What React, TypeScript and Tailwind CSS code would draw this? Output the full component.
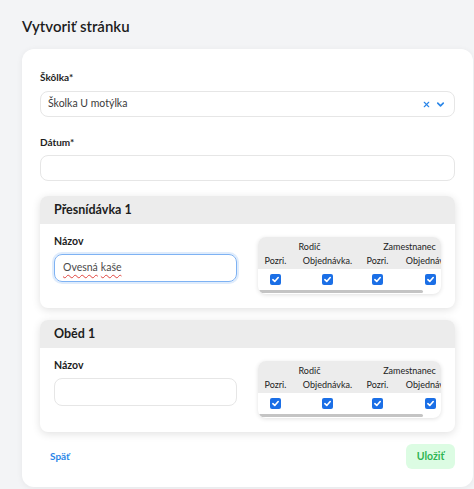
import React from "react";
import { X, ChevronDown } from "lucide-react";

const Check = () => (
    <span className="w-[11px] h-[11px] rounded-[2px] bg-[#1b6fe6] flex items-center justify-center">
        <svg width="9" height="9" viewBox="0 0 12 12" fill="none" stroke="white" strokeWidth="2.2" strokeLinecap="round" strokeLinejoin="round">
            <path d="M2.5 6.3 5 8.6 9.6 3.4" />
        </svg>
    </span>
);

// column widths of the scrolling rights table
const cols = ["w-[36px]", "w-[68px]", "w-[32px]", "w-[74px]"];

const RightsTable = () => (
    <div className="mt-[13px] w-[184px] h-[57px] rounded-[8px] bg-white shadow-[0_1px_4px_rgba(0,0,0,0.12)] overflow-hidden flex flex-col">
        <div className="w-[210px] bg-[#ececec] text-[9px] text-[#222]">
            <div className="flex h-[16px] items-end leading-[12px]">
                <div className="w-[104px] text-center">Rodič</div>
                <div className="w-[96px] text-center">Zamestnanec</div>
            </div>
            <div className="flex h-[16px] items-center leading-[12px]">
                <div className={`${cols[0]} text-center`}>Pozri.</div>
                <div className={`${cols[1]} text-center`}>Objednávka.</div>
                <div className={`${cols[2]} text-center`}>Pozri.</div>
                <div className={`${cols[3]} text-center whitespace-nowrap`}>Objednávka.</div>
            </div>
        </div>
        <div className="w-[210px] flex h-[21px] items-center">
            {cols.map((c, i) => (
                <div key={i} className={`${c} flex justify-center`}>
                    <Check />
                </div>
            ))}
        </div>
        <div className="h-[3px] w-[165px] rounded-full bg-[#c4c4c4]" />
    </div>
);

const MealSection = ({ title, value }: { title: string; value?: string }) => (
    <div className="rounded-[8px] bg-white overflow-hidden shadow-[0_2px_8px_rgba(0,0,0,0.12)]">
        <div className="h-[28px] bg-[#ececec] px-[14px] flex items-center text-[12.5px] font-bold text-[#1d1d1d]">{title}</div>
        <div className="h-[84px] flex px-[14px] gap-[21px]">
            <div className="w-[183px] pt-[8px]">
                <div className="h-[18px] leading-[18px] text-[10.5px] font-bold text-[#1d1d1d]">Názov</div>
                {value ? (
                    <div className="mt-[4px] h-[28px] rounded-[8px] border-[1.5px] border-[#7eb2f3] shadow-[0_0_0_2px_rgba(126,178,243,0.25)] flex items-center px-[8px] text-[10.5px] text-[#4a4a4a]">
                        {value.split(" ").map((w, i) => (
                            <span key={i} className="underline decoration-wavy decoration-[#e0443e] decoration-1 underline-offset-[3px] mr-[3px]">{w}</span>
                        ))}
                    </div>
                ) : (
                    <div className="mt-[4px] h-[28px] rounded-[8px] border border-[#e6e6e6]" />
                )}
            </div>
            <RightsTable />
        </div>
    </div>
);

export default function App() {
    return (
        <div className="w-[474px] h-[489px] overflow-hidden bg-[#f3f4f6] font-['Lato',sans-serif] text-[#1d1d1d]">
            <div className="pl-[22px] pt-[14px]">
                <h1 className="h-[24px] leading-[24px] text-[15px] font-semibold">Vytvoriť stránku</h1>

                <div className="mt-[11px] w-[451px] rounded-[12px] bg-white shadow-[0_1px_6px_rgba(0,0,0,0.06)] px-[18px] pt-[19px] pb-[18px]">
                    <div className="h-[18px] leading-[18px] text-[10px] font-bold">Škôlka*</div>
                    <div className="mt-[5px] h-[26px] rounded-[8px] border border-[#e6e6e6] flex items-center justify-between pl-[7px] pr-[8px]">
                        <span className="text-[10.5px] text-[#3a3a3a]">Školka U motýlka</span>
                        <span className="flex items-center gap-[4px] text-[#2a86e8]">
                            <X size={9} strokeWidth={3} />
                            <ChevronDown size={11} strokeWidth={3.5} />
                        </span>
                    </div>

                    <div className="mt-[16px] h-[18px] leading-[18px] text-[10px] font-bold">Dátum*</div>
                    <div className="mt-[4px] h-[26px] rounded-[8px] border border-[#e6e6e6]" />

                    <div className="mt-[15px] flex flex-col gap-[12px]">
                        <MealSection title="Přesnídávka 1" value="Ovesná kaše" />
                        <MealSection title="Oběd 1" />
                    </div>

                    <div className="mt-[12px] flex items-center justify-between">
                        <button className="pl-[10px] text-[10px] font-bold text-[#2a86e8]">Späť</button>
                        <button className="h-[25px] w-[49px] rounded-[6px] bg-[#dcfce3] text-[10.5px] font-bold text-[#2fb552]">Uložiť</button>
                    </div>
                </div>
            </div>
        </div>
    );
}
